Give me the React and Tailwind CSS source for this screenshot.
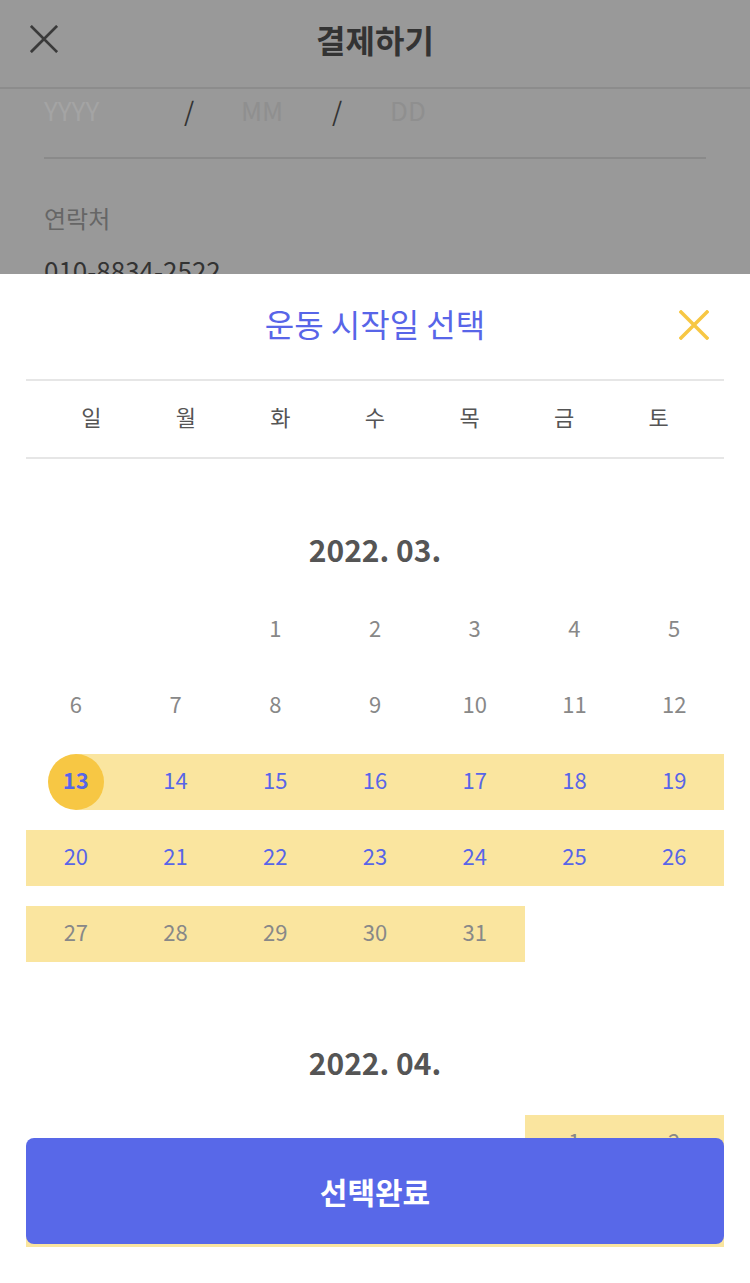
import React from "react";

const font = { fontFamily: '"Noto Sans CJK KR", "Noto Sans", sans-serif' };

const weekdays = ["일", "월", "화", "수", "목", "금", "토"];

// March 2022 starts on Tuesday, April 2022 on Friday
const buildMonth = (offset, days) => {
    const cells = [];
    for (let i = 0; i < offset; i++) cells.push(null);
    for (let d = 1; d <= days; d++) cells.push(d);
    while (cells.length % 7 !== 0) cells.push(null);
    const rows = [];
    for (let i = 0; i < cells.length; i += 7) rows.push(cells.slice(i, i + 7));
    return rows;
};

const Cross = ({ className, size = 30, strokeWidth = 3 }) => (
    <svg width={size} height={size} viewBox="0 0 30 30" className={className}>
        <path d="M2 2 L28 28 M28 2 L2 28" stroke="currentColor" strokeWidth={strokeWidth} strokeLinecap="square" fill="none" />
    </svg>
);

const DayCell = ({ day, month }) => {
    if (day === null) return <div className="h-[56px]" />;
    const isStart = month === 3 && day === 13;
    const inRange = month === 4 || (month === 3 && day >= 13);
    const blue = month === 3 && day >= 13 && day <= 26;

    if (isStart) {
        return (
            <div className="relative h-[56px] flex items-center justify-center">
                <div className="absolute left-1/2 right-0 top-0 bottom-0 bg-[#fae59f]" />
                <div className="relative w-[56px] h-[56px] pb-[6px] rounded-full bg-[#f7c744] flex items-center justify-center text-[22px] font-bold text-[#5865e8]">
                    {day}
                </div>
            </div>
        );
    }

    return (
        <div className={`h-[56px] pb-[6px] flex items-center justify-center text-[22px] ${inRange ? "bg-[#fae59f]" : ""} ${blue ? "text-[#5865e8]" : "text-[#888888]"}`}>
            {day}
        </div>
    );
};

const Month = ({ label, month, offset, days, maxRows }) => (
    <div>
        <div className="pt-[72px] mb-[25px]">
            <h2 className="h-[36px] leading-[36px] text-center text-[30px] font-bold text-[#555555]">{label}</h2>
        </div>
        <div className="px-[26px]">
            {buildMonth(offset, days).slice(0, maxRows).map((row, i) => (
                <div key={i} className="grid grid-cols-7 h-[76px] items-center">
                    {row.map((day, j) => (
                        <DayCell key={j} day={day} month={month} />
                    ))}
                </div>
            ))}
        </div>
    </div>
);

const App = () => {
    return (
        <div className="relative w-[750px] h-[1283px] overflow-hidden bg-[#999999]" style={font}>
            {/* dimmed page behind the sheet */}
            <header className="h-[89px] flex items-center relative border-b-2 border-[#8c8c8c]">
                <Cross className="absolute left-[30px] top-[25px] text-[#3a3a3a]" size={28} strokeWidth={3} />
                <h1 className="w-full text-center text-[32px] font-bold text-[#333333] -mt-[10px]">결제하기</h1>
            </header>
            <div className="px-[44px]">
                <div className="flex items-center h-[42px] -mt-[1px] text-[26px]">
                    <span className="w-[140px] text-[#a4a4a4]">YYYY</span>
                    <span className="w-[57px] text-[#333333]">/</span>
                    <span className="w-[91px] text-[#8f8f8f]">MM</span>
                    <span className="w-[58px] text-[#333333]">/</span>
                    <span className="text-[#8f8f8f]">DD</span>
                </div>
                <div className="mt-[27px] border-b-2 border-[#8a8a8a]" />
                <div className="mt-[41px] text-[24px] text-[#666666] leading-[36px]">연락처</div>
                <div className="mt-[16px] text-[26px] text-[#333333] leading-[36px]">010-8834-2522</div>
            </div>

            {/* bottom sheet */}
            <div className="absolute left-0 right-0 top-[274px] bottom-0 bg-white">
                <div className="h-[974px] overflow-hidden">
                    <div className="relative h-[105px] flex items-center justify-center">
                        <h2 className="text-[32px] text-[#5865e8] -mt-[8px]">운동 시작일 선택</h2>
                        <Cross className="absolute right-[41px] top-[36px] text-[#f7c744]" size={30} strokeWidth={3.5} />
                    </div>
                    <div className="mx-[26px] border-t-2 border-b-2 border-[#e6e6e6]">
                        <div className="h-[76px] px-[18px] grid grid-cols-7 items-center">
                            {weekdays.map((w) => (
                                <span key={w} className="text-center text-[22px] text-[#555555] -mt-[6px]">{w}</span>
                            ))}
                        </div>
                    </div>
                    <Month label="2022. 03." month={3} offset={2} days={31} />
                    <Month label="2022. 04." month={4} offset={5} days={30} maxRows={2} />
                </div>
            </div>

            <button className="absolute left-[26px] right-[26px] top-[1138px] h-[106px] rounded-[8px] bg-[#5868e8] text-white text-[30px] font-bold">
                선택완료
            </button>
        </div>
    );
};

export default App;
